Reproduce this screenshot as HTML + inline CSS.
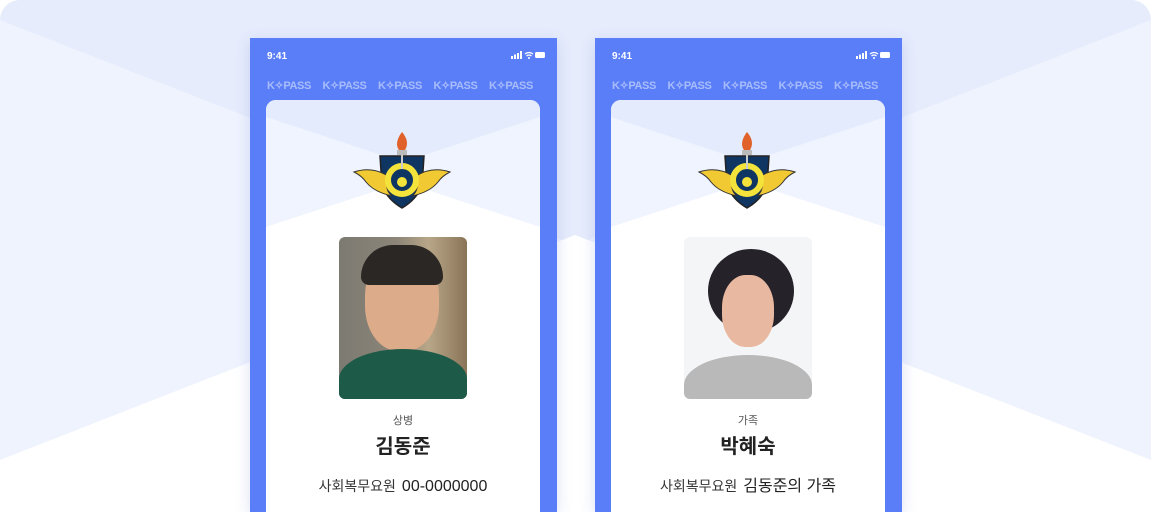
<!DOCTYPE html>
<html><head><meta charset="utf-8"><style>
*{margin:0;padding:0;box-sizing:border-box}
html,body{width:1151px;height:512px;overflow:hidden}
body{background:#fff;font-family:"Liberation Sans","Noto Sans CJK KR",sans-serif;position:relative}
.bg{position:absolute;left:0;top:0;width:1151px;height:512px;border-radius:20px 20px 0 0;overflow:hidden}
.phone{position:absolute;top:38px;width:307px;height:474px;background:#5a7ef7;box-shadow:0 4px 14px rgba(60,90,200,.18);overflow:hidden}
.time{position:absolute;left:17px;top:13px;color:#fff;font-size:10px;font-weight:bold}
.stat{position:absolute;right:12px;top:13px}
.kp{position:absolute;left:17px;top:41px;color:#a9bdfb;font-size:11px;font-weight:bold;letter-spacing:-.4px;white-space:nowrap}
.kp span{display:inline-block;width:55.5px}
.card{position:absolute;left:16px;top:62px;width:274px;height:430px;background:#fff;border-radius:10px;overflow:hidden}
.photo{position:absolute;left:73px;top:137px;width:128px;height:162px;border-radius:6px;overflow:hidden}
.rank{position:absolute;left:0;width:274px;top:314px;text-align:center;font-size:11px;color:#555;line-height:14px}
.name{position:absolute;left:0;width:274px;top:333px;text-align:center;font-size:20px;font-weight:bold;color:#222;line-height:28px}
.info{position:absolute;left:0;width:274px;top:376px;text-align:center;font-size:14px;color:#333;line-height:20px}
.info b{font-weight:normal;font-size:16px;color:#222;margin-left:6px}
</style></head><body>
<svg class="bg" width="1151" height="512">
<rect width="1151" height="512" fill="#eff3fe"/>
<polygon points="0,0 1151,0 1151,20 575,245 0,20" fill="#e6ecfc"/>
<polygon points="0,460 575,235 1151,460 1151,512 0,512" fill="#ffffff"/>
</svg>

<div class="phone" style="left:250px">
<div class="time">9:41</div>
<svg class="stat" width="34" height="8"><rect x="0" y="5" width="2" height="3" fill="#fff"/><rect x="3" y="3.5" width="2" height="4.5" fill="#fff"/><rect x="6" y="2" width="2" height="6" fill="#fff"/><rect x="9" y="0" width="2" height="8" fill="#fff"/><path d="M14 3 Q18 0 22 3 M15.5 5 Q18 3 20.5 5" stroke="#fff" stroke-width="1.3" fill="none"/><circle cx="18" cy="7" r="1" fill="#fff"/><rect x="24" y="1" width="10" height="6" rx="1.5" fill="#fff"/></svg>
<div class="kp"><span>K✧PASS</span><span>K✧PASS</span><span>K✧PASS</span><span>K✧PASS</span><span>K✧PASS</span></div>
<div class="card">
<svg width="274" height="430" style="position:absolute;left:0;top:0">
<rect width="274" height="430" fill="#f0f4fe"/>
<polygon points="0,0 274,0 274,17 137,62 0,17" fill="#e4ebfc"/>
<polygon points="0,127 137,82 274,127 274,430 0,430" fill="#fff"/>
<g transform="translate(86,30)">
<path d="M50 2 C44 10 44 16 47 20 L53 20 C56 15 56 9 50 2Z" fill="#e0622a"/>
<rect x="45" y="20" width="10" height="5" fill="#bbb"/>
<path d="M28 26 L72 26 L70 56 Q64 70 50 78 Q36 70 30 56Z" fill="#0f3563" stroke="#222" stroke-width="1.5"/>
<path d="M2 42 Q20 36 36 46 Q32 60 40 66 Q22 62 14 52 Q10 46 2 42Z" fill="#f1c933" stroke="#333" stroke-width="1"/>
<path d="M98 42 Q80 36 64 46 Q68 60 60 66 Q78 62 86 52 Q90 46 98 42Z" fill="#f1c933" stroke="#333" stroke-width="1"/>
<circle cx="50" cy="50" r="14" fill="none" stroke="#f3e33a" stroke-width="6"/>
<circle cx="50" cy="52" r="5" fill="#f3e33a"/>
<rect x="49" y="25" width="2" height="14" fill="#ccc"/>
</g>
</svg>
<div class="photo" style="background:linear-gradient(90deg,#7c7a72 0%,#8c8578 45%,#b8a688 70%,#8a7458 100%)">
<div style="position:absolute;left:26px;top:14px;width:74px;height:100px;border-radius:45%;background:#dcab8a"></div>
<div style="position:absolute;left:22px;top:8px;width:82px;height:40px;border-radius:40px 40px 10px 10px;background:#2b2724"></div>
<div style="position:absolute;left:0;top:112px;width:128px;height:60px;border-radius:50% 50% 0 0;background:#1e5a48"></div>
</div>
<div class="rank">상병</div>
<div class="name">김동준</div>
<div class="info">사회복무요원<b>00-0000000</b></div>
</div>
</div>

<div class="phone" style="left:595px">
<div class="time">9:41</div>
<svg class="stat" width="34" height="8"><rect x="0" y="5" width="2" height="3" fill="#fff"/><rect x="3" y="3.5" width="2" height="4.5" fill="#fff"/><rect x="6" y="2" width="2" height="6" fill="#fff"/><rect x="9" y="0" width="2" height="8" fill="#fff"/><path d="M14 3 Q18 0 22 3 M15.5 5 Q18 3 20.5 5" stroke="#fff" stroke-width="1.3" fill="none"/><circle cx="18" cy="7" r="1" fill="#fff"/><rect x="24" y="1" width="10" height="6" rx="1.5" fill="#fff"/></svg>
<div class="kp"><span>K✧PASS</span><span>K✧PASS</span><span>K✧PASS</span><span>K✧PASS</span><span>K✧PASS</span></div>
<div class="card">
<svg width="274" height="430" style="position:absolute;left:0;top:0">
<rect width="274" height="430" fill="#f0f4fe"/>
<polygon points="0,0 274,0 274,17 137,62 0,17" fill="#e4ebfc"/>
<polygon points="0,127 137,82 274,127 274,430 0,430" fill="#fff"/>
<g transform="translate(86,30)">
<path d="M50 2 C44 10 44 16 47 20 L53 20 C56 15 56 9 50 2Z" fill="#e0622a"/>
<rect x="45" y="20" width="10" height="5" fill="#bbb"/>
<path d="M28 26 L72 26 L70 56 Q64 70 50 78 Q36 70 30 56Z" fill="#0f3563" stroke="#222" stroke-width="1.5"/>
<path d="M2 42 Q20 36 36 46 Q32 60 40 66 Q22 62 14 52 Q10 46 2 42Z" fill="#f1c933" stroke="#333" stroke-width="1"/>
<path d="M98 42 Q80 36 64 46 Q68 60 60 66 Q78 62 86 52 Q90 46 98 42Z" fill="#f1c933" stroke="#333" stroke-width="1"/>
<circle cx="50" cy="50" r="14" fill="none" stroke="#f3e33a" stroke-width="6"/>
<circle cx="50" cy="52" r="5" fill="#f3e33a"/>
<rect x="49" y="25" width="2" height="14" fill="#ccc"/>
</g>
</svg>
<div class="photo" style="background:#f4f5f6">
<div style="position:absolute;left:24px;top:12px;width:86px;height:84px;border-radius:50%;background:#25222a"></div>
<div style="position:absolute;left:38px;top:38px;width:52px;height:72px;border-radius:45%;background:#e8b8a0"></div>
<div style="position:absolute;left:0;top:118px;width:128px;height:60px;border-radius:50% 50% 0 0;background:#b9b9b9"></div>
</div>
<div class="rank">가족</div>
<div class="name">박혜숙</div>
<div class="info">사회복무요원<b>김동준의 가족</b></div>
</div>
</div>
</body></html>
